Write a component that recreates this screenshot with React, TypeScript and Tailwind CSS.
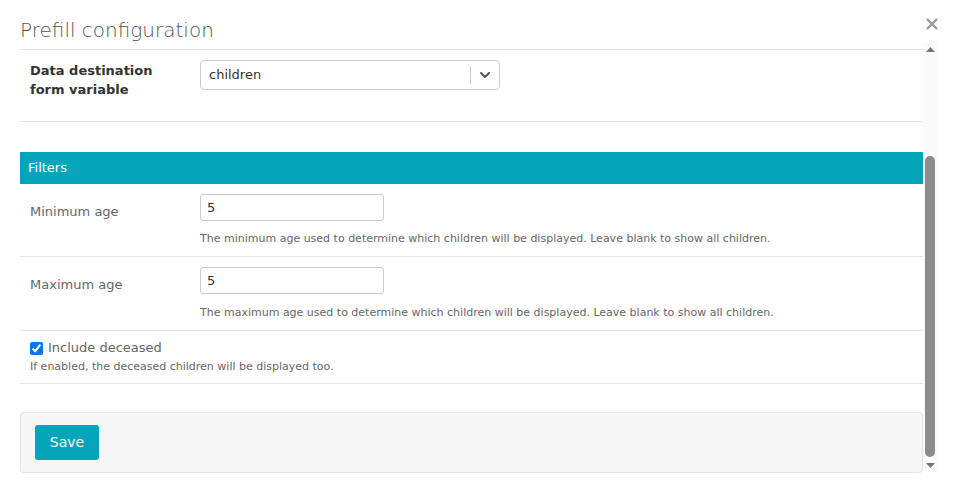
import { ChevronDown } from 'lucide-react'

type HelpRowProps = {
  label: string
  value: string
  help: string
  helpGap?: string
}

function AgeRow({ label, value, help, helpGap = 'mt-[10px]' }: HelpRowProps) {
  return (
    <div className="flex border-b border-[#e5e5e5] pt-[10px] pb-[10px]">
      <div className="w-[180px] pl-[10px] pt-[8px] text-[13px] text-[#666]">{label}</div>
      <div className="flex flex-col">
        <div className="w-[184px] h-[27px] border border-[#ccc] rounded-[3px] flex items-center px-[6px] text-[13px] text-[#333]">
          {value}
        </div>
        <div className={`${helpGap} text-[11px] leading-[15px] text-[#666]`}>{help}</div>
      </div>
    </div>
  )
}

export default function App() {
  return (
    <div
      className="w-[953px] h-[493px] bg-white relative overflow-hidden"
      style={{ fontFamily: '"DejaVu Sans", Verdana, sans-serif' }}
    >
      {/* close button */}
      <button className="absolute top-[17px] left-[925px] w-[14px] h-[14px]">
        <svg viewBox="0 0 14 14" width="14" height="14">
          <path d="M2 2 L12 12 M12 2 L2 12" stroke="#9a9a9a" strokeWidth="2.4" />
        </svg>
      </button>

      <div className="h-[42px] pl-[20px] pt-[16px]">
        <h2 className="text-[20px] leading-[28px] text-[#555] font-extralight">Prefill configuration</h2>
      </div>

      <div className="flex h-[430px] pl-[20px]">
        <div className="w-[903px] pt-[7px]">
          <div className="border-t border-[#e5e5e5]" />

          {/* destination */}
          <div className="flex h-[72px] border-b border-[#e5e5e5] pt-[10px]">
            <div className="w-[180px] pl-[10px] pt-[1px] text-[13px] leading-[19px] font-bold text-[#333]">
              Data destination<br />form variable
            </div>
            <div className="w-[300px] h-[30px] border border-[#ccc] rounded-[4px] flex items-center pl-[8px] pr-[6px] text-[13px] text-[#333]">
              <span className="flex-1">children</span>
              <span className="w-px h-[18px] bg-[#ccc] mr-[6px]" />
              <ChevronDown size={16} strokeWidth={3} color="#555" />
            </div>
          </div>

          {/* filters */}
          <div className="mt-[30px] h-[32px] bg-[#04a5bb] flex items-center pl-[8px] text-[13px] text-white">
            Filters
          </div>

          <AgeRow
            label="Minimum age"
            value="5"
            help="The minimum age used to determine which children will be displayed. Leave blank to show all children."
          />
          <AgeRow
            label="Maximum age"
            value="5"
            helpGap="mt-[11px]"
            help="The maximum age used to determine which children will be displayed. Leave blank to show all children."
          />

          <div className="border-b border-[#e5e5e5] pl-[10px] pt-[9px] pb-[9px]">
            <label className="flex items-center gap-[5px] text-[13px] leading-[16px] text-[#666]">
              <input type="checkbox" defaultChecked className="w-[13px] h-[13px] m-0" />
              Include deceased
            </label>
            <div className="mt-[3px] text-[11px] leading-[15px] text-[#666]">
              If enabled, the deceased children will be displayed too.
            </div>
          </div>

          {/* footer */}
          <div className="mt-[28px] h-[61px] bg-[#f7f7f7] border border-[#e3e3e3] rounded-[4px] flex items-center pl-[14px]">
            <button className="w-[64px] h-[35px] bg-[#04a5bb] rounded-[3px] text-white text-[14px]">Save</button>
          </div>
        </div>

        {/* scrollbar */}
        <div className="w-[14px] h-[430px] bg-[#fafafa] flex flex-col items-center">
          <svg width="9" height="5" viewBox="0 0 9 5" className="mt-[5px]">
            <path d="M0 5 L4.5 0 L9 5 Z" fill="#777" />
          </svg>
          <div className="mt-[104px] w-[10px] h-[301px] bg-[#8c8c8c] rounded-[5px]" />
          <svg width="9" height="5" viewBox="0 0 9 5" className="mt-[6px]">
            <path d="M0 0 L9 0 L4.5 5 Z" fill="#777" />
          </svg>
        </div>
      </div>
    </div>
  )
}
